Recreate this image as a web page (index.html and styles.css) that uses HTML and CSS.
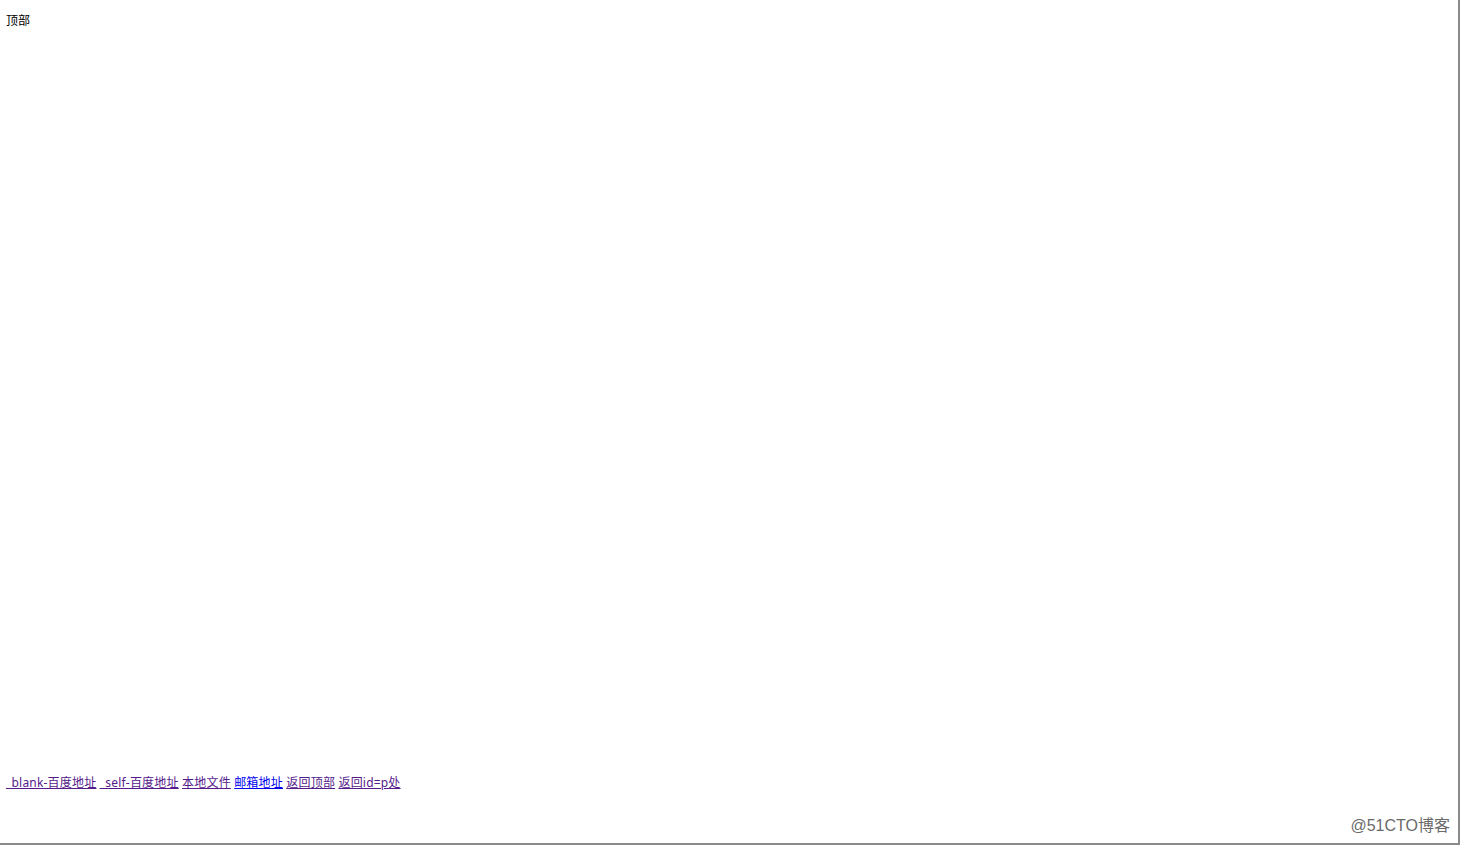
FILE: index.html
```html
<!DOCTYPE html>
<html lang="zh">
<head>
<meta charset="utf-8">
<title>链接</title>
<link rel="stylesheet" href="styles.css">
</head>
<body>
<div class="frame">
  <div class="top" id="top">顶部</div>
  <div class="spacer"></div>
  <div class="links" id="p">
    <a class="visited" href="#">_blank-百度地址</a>
    <a class="visited" href="#">_self-百度地址</a>
    <a class="visited" href="#">本地文件</a>
    <a class="fresh" href="#">邮箱地址</a>
    <a class="visited" href="#">返回顶部</a>
    <a class="visited" href="#">返回id=p处</a>
  </div>
  <div class="watermark">@51CTO博客</div>
</div>
</body>
</html>
```
FILE: styles.css
```css
html, body {
  margin: 0;
  padding: 0;
  background: #fff;
}
.frame {
  position: relative;
  width: 1458px;
  height: 843px;
  border-right: 2px solid #8a8a8a;
  border-bottom: 2px solid #8a8a8a;
  font-family: "Noto Sans", "Noto Sans CJK SC", sans-serif;
  font-size: 12px;
  color: #000;
  box-sizing: content-box;
}
.top {
  padding: 12px 0 0 6px;
  line-height: 17px;
}
.spacer {
  height: 745px;
}
.links {
  padding-left: 6px;
  line-height: 17px;
  letter-spacing: 0.2px;
}
.links a {
  text-decoration: underline;
}
.links a.visited {
  color: #551a8b;
}
.links a.fresh {
  color: #0000ee;
}
.watermark {
  position: absolute;
  right: 8px;
  bottom: 7px;
  font-family: "Liberation Sans", "Noto Sans CJK SC", sans-serif;
  font-size: 16px;
  color: #6a6a6a;
  line-height: 20px;
}
```
